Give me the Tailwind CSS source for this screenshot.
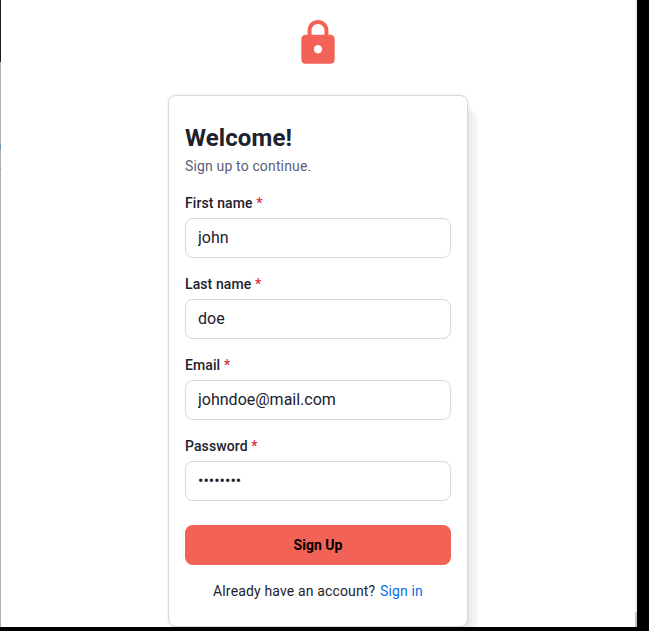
<!DOCTYPE html>
<html lang="en">
<head>
<meta charset="utf-8">
<title>Sign up</title>
<script src="https://cdn.jsdelivr.net/npm/@tailwindcss/browser@4"></script>
</head>
<body class="h-[631px] w-[649px] overflow-hidden bg-black font-[Roboto,sans-serif] text-[#21212e]">
<div class="flex h-[627px] w-[637px] overflow-hidden bg-white">
  <div class="flex w-px shrink-0 flex-col bg-[#b0b0b0]">
    <div class="h-[62px] bg-[#1b1f2a]"></div>
    <div class="mt-[82px] h-[6px] bg-[#6c9cc4]"></div>
    <div class="mt-[18px] h-px bg-[#8c8c9c]"></div>
  </div>
  <main class="flex flex-1 flex-col items-center pt-[18px]">
    <svg class="size-[50px] shrink-0" viewBox="0 0 24 24" fill="#f26257"><path d="M18 8h-1V6c0-2.760-2.240-5-5-5S7 3.240 7 6v2H6c-1.100 0-2 .9-2 2v10c0 1.100.9 2 2 2h12c1.100 0 2-.9 2-2V10c0-1.100-.9-2-2-2zm-6 9c-1.100 0-2-.9-2-2s.9-2 2-2 2 .9 2 2-.9 2-2 2zm3.100-9H8.900V6c0-1.710 1.390-3.100 3.100-3.100 1.710 0 3.100 1.390 3.100 3.100v2z"/></svg>
    <form class="mt-[27px] flex h-[532px] w-[300px] shrink-0 flex-col rounded-lg border border-[#d8d8dd] bg-white px-4 pt-[26px] shadow-[0_0_2px_1px_rgba(0,0,0,0.05),4px_8px_2px_rgba(0,0,0,0.03),9px_15px_2px_rgba(0,0,0,0.045)]">
      <h1 class="text-2xl font-bold leading-8 tracking-[0.1px]">Welcome!</h1>
      <p class="mt-0.5 text-sm leading-5 tracking-[0.15px] text-[#5d5d7b]">Sign up to continue.</p>
      <div class="mt-[17px] flex flex-col gap-4">
        <div><label for="first" class="block h-[25px] text-sm font-medium leading-5 tracking-[0.1px]">First name <span class="text-[#d92d3a]">*</span></label><input id="first" type="text" value="john" class="block h-10 w-full rounded-lg border border-[#d8d8dd] px-3 pb-0.5 text-base"></div>
        <div><label for="last" class="block h-[25px] text-sm font-medium leading-5 tracking-[0.1px]">Last name <span class="text-[#d92d3a]">*</span></label><input id="last" type="text" value="doe" class="block h-10 w-full rounded-lg border border-[#d8d8dd] px-3 pb-0.5 text-base"></div>
        <div><label for="email" class="block h-[25px] text-sm font-medium leading-5 tracking-[0.1px]">Email <span class="text-[#d92d3a]">*</span></label><input id="email" type="text" value="johndoe@mail.com" class="block h-10 w-full rounded-lg border border-[#d8d8dd] px-3 pb-0.5 text-base"></div>
        <div><label for="password" class="block h-[25px] text-sm font-medium leading-5 tracking-[0.1px]">Password <span class="text-[#d92d3a]">*</span></label><input id="password" type="password" value="password" class="block h-10 w-full rounded-lg border border-[#d8d8dd] px-3 pb-0.5 text-base"></div>
      </div>
      <button type="button" class="mt-6 h-10 rounded-lg bg-[#f26257] text-sm font-bold text-black">Sign Up</button>
      <p class="mt-4 text-center text-sm leading-5 tracking-[0.15px]">Already have an account? <a class="ml-px text-[#0c6fe8]">Sign in</a></p>
    </form>
  </main>
  <div class="flex w-[2px] shrink-0 flex-col justify-end bg-[#f1f1f1]"><div class="h-[15px] bg-[#c4c4c4]"></div></div>
</div>
</body>
</html>
